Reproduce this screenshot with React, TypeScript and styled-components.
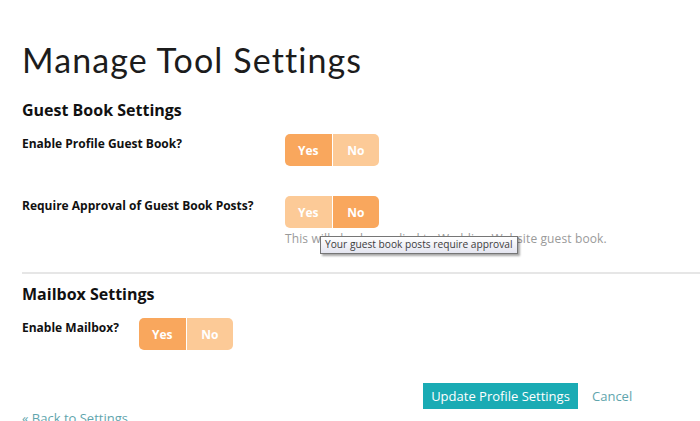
import React from "react";
import styled, { createGlobalStyle } from "styled-components";

const Global = createGlobalStyle`
  html, body { margin: 0; padding: 0; background: #fff; overflow: hidden; }
  body { font-family: "Open Sans", "Noto Sans", sans-serif; color: #1a1a1a; }
`;

const Page = styled.div`
  padding: 38px 0 0 22px;
  width: 700px;
  box-sizing: border-box;
`;

const Title = styled.h1`
  margin: 0;
  font-family: Lato, "Open Sans", sans-serif;
  font-weight: 400;
  font-size: 34px;
  line-height: 44px;
  letter-spacing: 1.1px;
  color: #1c1c1c;
`;

const SectionTitle = styled.h2`
  margin: 0;
  font-size: 16px;
  font-weight: 700;
  line-height: 22px;
  color: #111;
`;

const Section = styled.section<{ $top: number }>`
  margin-top: ${(p) => p.$top}px;
`;

const Row = styled.div<{ $top: number }>`
  display: flex;
  align-items: flex-start;
  margin-top: ${(p) => p.$top}px;
`;

const Label = styled.div<{ $width: number }>`
  width: ${(p) => p.$width}px;
  flex: none;
  font-size: 12px;
  font-weight: 700;
  line-height: 16px;
  padding-top: 2px;
  color: #111;
`;

const Control = styled.div`
  display: flex;
  flex-direction: column;
  position: relative;
`;

const Toggle = styled.div`
  display: flex;
  gap: 1px;
  border-radius: 5px;
  overflow: hidden;
  width: 94px;
  background: #fff;
`;

const ToggleButton = styled.button<{ $on: boolean }>`
  width: 46.5px;
  height: 32px;
  border: none;
  padding: 0;
  font-family: "Open Sans", sans-serif;
  font-size: 12px;
  font-weight: 700;
  color: #fff;
  background: ${(p) => (p.$on ? "#f9a75d" : "#fcca97")};
  cursor: pointer;
`;

const Help = styled.div`
  margin-top: 3px;
  font-size: 12px;
  line-height: 16px;
  letter-spacing: 0.12px;
  color: #9a9a9a;
  white-space: nowrap;
`;

const Tip = styled.div`
  position: absolute;
  left: 35px;
  top: 40px;
  padding: 1px 4px 2px;
  border: 1px solid #767676;
  background: linear-gradient(#ffffff, #e4e5f0);
  box-shadow: 2px 2px 2px rgba(0, 0, 0, 0.35);
  font-family: "Open Sans", sans-serif;
  font-size: 10.2px;
  line-height: 13px;
  color: #3c3c3c;
  white-space: nowrap;
`;

const Divider = styled.hr`
  margin: 25px 0 0 0;
  border: none;
  border-top: 2px solid #e6e6e6;
  width: 700px;
`;

const Actions = styled.div`
  display: flex;
  align-items: center;
  gap: 14px;
  margin: 33px 0 0 401px;
`;

const Primary = styled.button`
  height: 26px;
  width: 155px;
  border: none;
  background: #1aabb4;
  color: #fff;
  font-family: "Open Sans", sans-serif;
  font-size: 13px;
  padding: 0;
`;

const LinkText = styled.a`
  font-size: 13px;
  color: #5fa5ad;
  text-decoration: none;
`;

const Back = styled.a`
  display: block;
  margin-top: 1px;
  font-size: 13px;
  line-height: 16px;
  color: #5fa5ad;
  text-decoration: none;
`;

function YesNo({ value }: { value: boolean }) {
  return (
    <Toggle>
      <ToggleButton $on={value}>Yes</ToggleButton>
      <ToggleButton $on={!value}>No</ToggleButton>
    </Toggle>
  );
}

export default function App() {
  return (
    <>
      <Global />
      <Page>
        <Title>Manage Tool Settings</Title>
        <Section $top={17}>
          <SectionTitle>Guest Book Settings</SectionTitle>
          <Row $top={13}>
            <Label $width={263}>Enable Profile Guest Book?</Label>
            <Control>
              <YesNo value={true} />
            </Control>
          </Row>
          <Row $top={30}>
            <Label $width={263}>Require Approval of Guest Book Posts?</Label>
            <Control>
              <YesNo value={false} />
              <Help>This will also be applied to Wedding Website guest book.</Help>
              <Tip>Your guest book posts require approval</Tip>
            </Control>
          </Row>
        </Section>
        <Divider />
        <Section $top={9}>
          <SectionTitle>Mailbox Settings</SectionTitle>
          <Row $top={13}>
            <Label $width={117}>Enable Mailbox?</Label>
            <Control>
              <YesNo value={true} />
            </Control>
          </Row>
        </Section>
        <Actions>
          <Primary>Update Profile Settings</Primary>
          <LinkText href="#">Cancel</LinkText>
        </Actions>
        <Back href="#">« Back to Settings</Back>
      </Page>
    </>
  );
}
